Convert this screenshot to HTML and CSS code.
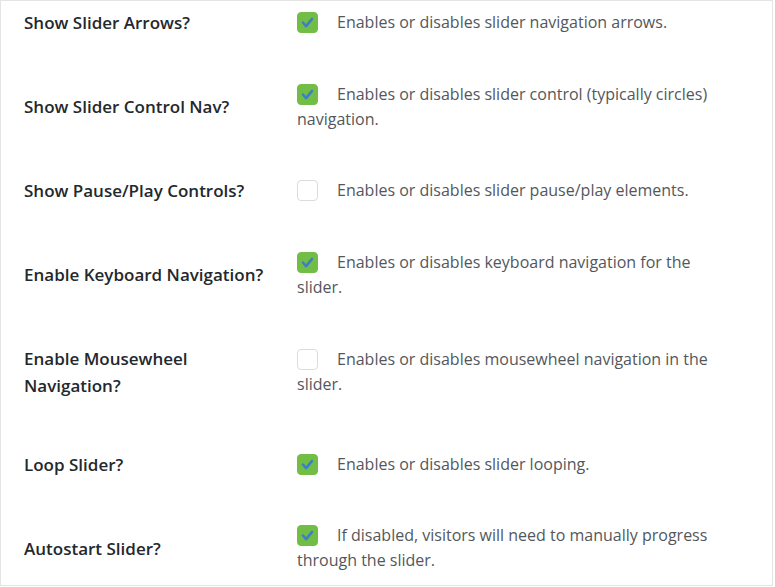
FILE: index.html
```html
<!DOCTYPE html>
<html lang="en">
<head>
<meta charset="utf-8">
<title>Slider settings</title>
<link rel="stylesheet" href="styles.css">
</head>
<body>
<div class="card">
  <div class="row">
    <div class="label">Show Slider Arrows?</div>
    <div class="desc"><span class="cb on"><svg viewBox="0 0 21 21"><path d="M5.5 10.5 L9 14.5 L15.5 6.5"/></svg></span>Enables or disables slider navigation arrows.</div>
  </div>
  <div class="row">
    <div class="label">Show Slider Control Nav?</div>
    <div class="desc"><span class="cb on"><svg viewBox="0 0 21 21"><path d="M5.5 10.5 L9 14.5 L15.5 6.5"/></svg></span>Enables or disables slider control (typically circles) navigation.</div>
  </div>
  <div class="row">
    <div class="label">Show Pause/Play Controls?</div>
    <div class="desc"><span class="cb"></span>Enables or disables slider pause/play elements.</div>
  </div>
  <div class="row">
    <div class="label">Enable Keyboard Navigation?</div>
    <div class="desc"><span class="cb on"><svg viewBox="0 0 21 21"><path d="M5.5 10.5 L9 14.5 L15.5 6.5"/></svg></span>Enables or disables keyboard navigation for the slider.</div>
  </div>
  <div class="row">
    <div class="label">Enable Mousewheel Navigation?</div>
    <div class="desc"><span class="cb"></span>Enables or disables mousewheel navigation in the slider.</div>
  </div>
  <div class="row">
    <div class="label">Loop Slider?</div>
    <div class="desc"><span class="cb on"><svg viewBox="0 0 21 21"><path d="M5.5 10.5 L9 14.5 L15.5 6.5"/></svg></span>Enables or disables slider looping.</div>
  </div>
  <div class="row">
    <div class="label">Autostart Slider?</div>
    <div class="desc"><span class="cb on"><svg viewBox="0 0 21 21"><path d="M5.5 10.5 L9 14.5 L15.5 6.5"/></svg></span>If disabled, visitors will need to manually progress through the slider.</div>
  </div>
</div>
</body>
</html>
```
FILE: styles.css
```css
* { box-sizing: border-box; }
html, body { margin: 0; padding: 0; background: #ffffff; }
body { font-family: "Open Sans", "Noto Sans", sans-serif; }

.card {
  width: 773px;
  height: 586px;
  border: 1px solid #e4e4e4;
  background: #fff;
  padding: 2px 0 0 23px;
  display: flex;
  flex-direction: column;
  gap: 39.5px;
}

.row {
  display: grid;
  grid-template-columns: 273px 432px;
  align-items: center;
}

.label {
  font-size: 17px;
  font-weight: 600;
  line-height: 27px;
  color: #23282d;
  padding: 6px 16px 6px 0;
}

.desc {
  font-size: 16px;
  line-height: 25px;
  color: #53575c;
}

.cb {
  display: inline-block;
  width: 21px;
  height: 21px;
  border-radius: 4px;
  border: 1px solid #dcdcde;
  background: #fff;
  vertical-align: -5px;
  margin-right: 19px;
}

.cb.on {
  background: #72bd45;
  border-color: #72bd45;
}

.cb svg {
  display: block;
  width: 19px;
  height: 19px;
}

.cb svg path {
  fill: none;
  stroke: #3a7fc7;
  stroke-width: 2.8;
  stroke-linecap: round;
  stroke-linejoin: round;
}
```
